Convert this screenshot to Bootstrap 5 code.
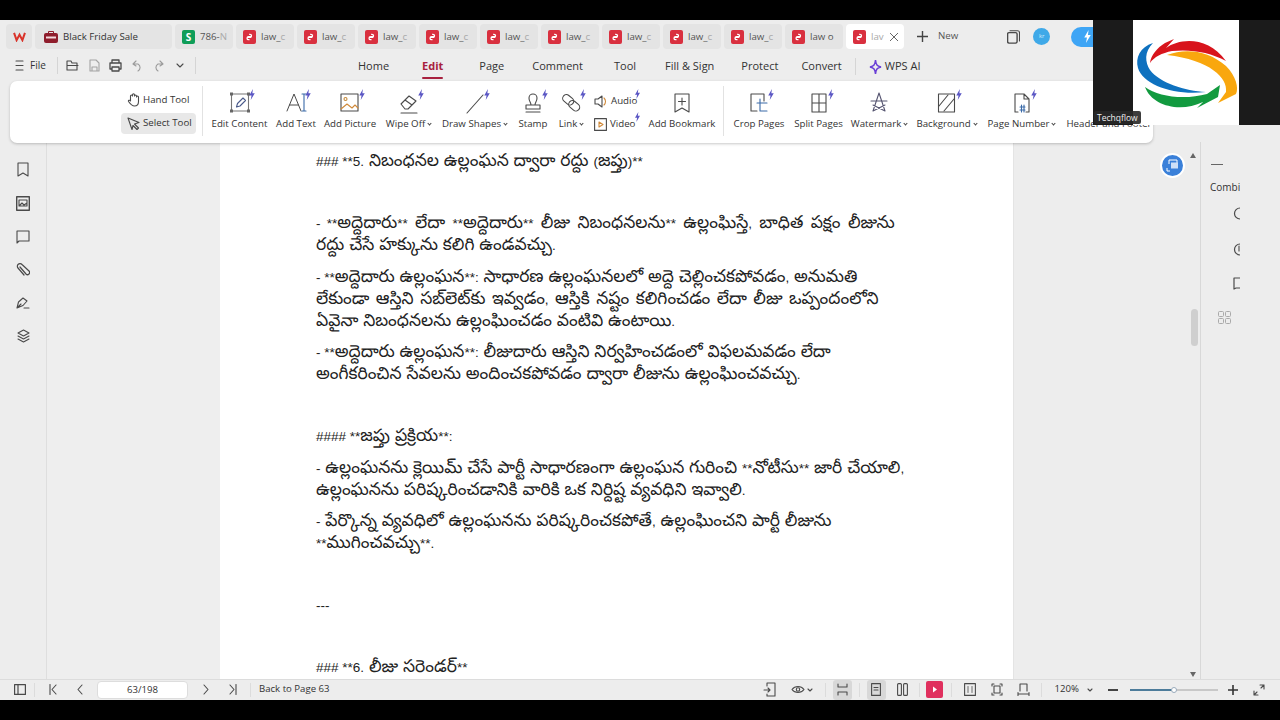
<!DOCTYPE html>
<html lang="te">
<head>
<meta charset="UTF-8">
<title>WPS PDF</title>
<link href="https://cdn.jsdelivr.net/npm/bootstrap@5.3.1/dist/css/bootstrap.min.css" rel="stylesheet">
<style>
html, body { height: 100%; overflow: hidden; background: #000; }
body { font-family: "Open Sans", "Liberation Sans", sans-serif; color: #333; }
svg { display: block; flex: none; }
.ic { fill: none; stroke: #4a4a4a; stroke-width: 1.1; stroke-linejoin: round; stroke-linecap: round; }

.app-frame { position: relative; width: 1280px; height: 720px; padding: 20px 0; overflow: hidden; }
.app-inner { height: 680px; background: #ededed; display: flex; flex-direction: column; }

/* tabs */
.tab-strip { height: 30px; padding: 4px 0 1px 6px; gap: 3px; }
.tab-item { height: 25px; width: 58px; border-radius: 4px; background: #e4e4e4; font-size: 9.7px; color: #555; padding-left: 7px; gap: 5px; white-space: nowrap; overflow: hidden; flex: none; }
.tab-item > span:not(.tab-s):not(.tab-pdf) { padding-top: 2px; }
.tab-logo { width: 26px; padding: 0; justify-content: center; }
.tab-sale { width: 137px; padding-left: 9px; color: #333; }
.tab-active { background: #fff; }
.tab-fade { color: #aaa; }
.tab-s { width: 13px; height: 14px; background: #0f9d58; color: #fff; border-radius: 2px; font-size: 10px; font-weight: 700; text-align: center; line-height: 14px; flex: none; }
.tab-pdf { width: 13px; height: 14px; background: #d9303f; border-radius: 2px; flex: none; padding: 2px 3px; }
.new-tab { font-size: 9.7px; color: #555; margin-left: 10px; gap: 10px; }
.win-ic { margin-left: 46px; }
.user-dot { width: 17px; height: 17px; border-radius: 50%; background: #3fa9e8; color: #cfe9fa; font-size: 6px; text-align: center; line-height: 17px; margin-left: 10px; flex: none; }
.bolt-pill { width: 40px; height: 20px; background: #3ea5f5; border-radius: 10px 0 0 10px; margin-left: 18px; padding-left: 12px; flex: none; }

/* menu row */
.menu-row { height: 31px; font-size: 11px; position: relative; }
.quick-bar { width: 198px; padding-left: 15px; height: 100%; flex: none; }
.file-txt { font-size: 10px; margin: 0 11px 0 6px; }
.quick-sep { width: 1px; height: 17px; background: #d5d5d5; flex: none; }
.quick-btn { width: 21.5px; display: flex; justify-content: center; flex: none; }
.menu-links { margin-left: 160px; padding-top: 2px; white-space: nowrap; }
.menu-links > span:nth-child(2) { margin-left: 33px; }
.menu-links > span:nth-child(3) { margin-left: 36px; }
.menu-links > span:nth-child(4) { margin-left: 28px; }
.menu-links > span:nth-child(5) { margin-left: 31px; }
.menu-links > span:nth-child(6) { margin-left: 29px; }
.menu-links > span:nth-child(7) { margin-left: 27px; }
.menu-links > span:nth-child(8) { margin-left: 23px; }
.menu-on { color: #a8213f; font-weight: 700; position: relative; }
.menu-on::after { content: ""; position: absolute; left: 0; right: 0; bottom: -4px; height: 2px; background: #a8213f; border-radius: 1px; }
.menu-links > .ai-link { gap: 3px; margin-left: 13px; padding-left: 13px; border-left: 1px solid #d5d5d5; }

/* ribbon */
.ribbon-card { height: 62px; margin: 0 127px 0 10px; background: #fff; border-radius: 7px; box-shadow: 0 1px 3px rgba(0,0,0,.22); padding: 3px 0 0; position: relative; z-index: 2; font-size: 9.7px; white-space: nowrap; }
.hand-col { width: 192px; padding: 5px 0 0 111px; flex: none; }
.hand-row { height: 22px; gap: 3px; padding-left: 6px; }
.hand-on { background: #e8e8e8; border-radius: 4px; margin-top: 2px; width: 75px; height: 21px; }
.rib-sep { width: 1px; height: 50px; background: #e2e2e2; flex: none; margin-top: 2px; }
.tool-tile { display: flex; flex-direction: column; align-items: center; flex: none; height: 52px; position: relative; }
.tool-tile svg.main { margin-top: 5px; height: 26px; }
.tool-tile span { margin-top: 2px; line-height: 14px; }
.tool-bolt { position: absolute; top: 5px; left: calc(50% + 8px); }
.media-bolt { position: absolute; top: -1px; right: 1px; }
.caret-mini::after { content: ""; display: inline-block; width: 3px; height: 3px; border-right: 1px solid #444; border-bottom: 1px solid #444; transform: rotate(45deg); margin: 0 0 2px 3px; }
.w-edit { width: 55px; margin-left: 9px; }
.w-text { width: 40px; margin-left: 9px; }
.w-pic { width: 52px; margin-left: 8px; }
.w-wipe { width: 47px; margin-left: 9px; }
.w-draw { width: 65px; margin-left: 10px; }
.w-stamp { width: 30px; margin-left: 11px; }
.w-link { width: 26px; margin-left: 10px; }
.w-book { width: 68px; margin-left: 6px; }
.w-crop { width: 50px; margin-left: 10px; }
.w-split { width: 49px; margin-left: 10px; }
.w-mark { width: 56px; margin-left: 8px; }
.w-back { width: 61px; margin-left: 9px; }
.w-num { width: 69px; margin-left: 10px; }
.w-head { width: 90px; margin-left: 8px; }
.media-col { width: 48px; margin-left: 10px; padding-top: 6px; flex: none; }
.media-row { height: 23px; gap: 3px; position: relative; }
.sep-b { margin-left: 7px; }

/* body */
.work-area { height: 537px; margin-top: -1px; }
.side-rail { width: 47px; border-right: 1px solid #dedede; flex: none; padding-top: 20px; gap: 19px; }
.gray-left { width: 173px; flex: none; background: #eeeeee; }
.pdf-sheet { width: 793px; flex: none; background: #fff; padding: 10px 0 0 96px; font-family: "Noto Sans Telugu", "Noto Sans", "DejaVu Sans", sans-serif; font-size: 17.2px; line-height: 22px; color: #222; overflow: hidden; white-space: nowrap; }
.pdf-sheet p { margin: 0 0 9.5px; }
.pdf-sheet p.big-gap { margin-bottom: 40px; }
.lat-run { font-family: "Liberation Sans", Arial, sans-serif; font-size: 13.5px; line-height: 0; }
.line-wide { word-spacing: 2.5px; }
.line-wide-b { word-spacing: 1.6px; }
.gray-right { width: 187px; flex: none; position: relative; border-left: 1px solid #e4e4e4; }
.float-btn { position: absolute; left: 146px; top: 11px; width: 25px; height: 25px; border-radius: 50%; background: #3a80d9; border: 2px solid #fff; padding: 4px; }
.scroll-up, .scroll-down { position: absolute; left: 176px; width: 0; height: 0; border-left: 3px solid transparent; border-right: 3px solid transparent; }
.scroll-up { top: 11px; border-bottom: 5px solid #666; }
.scroll-down { bottom: 2px; border-top: 5px solid #666; }
.scroll-thumb { position: absolute; left: 177px; top: 167px; width: 7px; height: 37px; background: #cfcfcf; border-radius: 4px; }
.right-panel { flex: 1; border-left: 1px solid #d8d8d8; position: relative; font-size: 10px; }
.panel-clip { width: 39px; overflow: hidden; padding: 22px 0 0 9px; }
.panel-dash { width: 12px; height: 1px; background: #666; margin-left: 1px; }
.panel-title { margin-top: 15px; line-height: 14px; white-space: nowrap; }
.panel-cut { width: 10px; height: 13px; margin: 13px 0 0 23px; overflow: hidden; }
.panel-cut.gap-a { margin-top: 23px; }
.panel-cut.gap-b { margin-top: 21px; }
.panel-grid { margin: 21px 0 0 8px; }

/* status bar */
.status-row { height: 20px; border-top: 1px solid #dcdcdc; font-size: 9.6px; position: relative; z-index: 2; }
.st-left { padding-left: 14px; }
.st-btn { width: 27px; display: flex; justify-content: center; align-items: center; height: 20px; flex: none; }
.st-sep { width: 1px; height: 14px; background: #dcdcdc; flex: none; }
.page-box { width: 91px; height: 18px; background: #fff; border: 1px solid #ddd; border-radius: 4px; text-align: center; line-height: 15px; margin: 0 4px; flex: none; }
.st-hot { background: #d8d8d8; border-radius: 3px; }
.st-tiny { width: 19px; margin: 0 7px; }
.st-tiny-b { margin-left: .5px; }
.st-play { width: 17px; margin: 0 8px 0 6px; }
.st-eye { width: 19px; margin-left: 5px; }
.st-eye-caret { margin-right: 11.5px; }
.st-zoombtn-a { margin-left: 4px; }
.st-zoombtn-b { margin-right: 3.5px; }
.zoom-txt { margin: 0 2px 0 13px; width: 30px; }
.zoom-caret { margin-right: 15px; }
.zoom-track { width: 88px; height: 2px; background: #c8c8c8; position: relative; flex: none; margin: 0 3px 0 12px; }
.zoom-fill { width: 44px; height: 2px; background: #4d7c9b; }
.zoom-knob { position: absolute; left: 41px; top: -2px; width: 6px; height: 6px; border-radius: 50%; background: #fff; border: 1px solid #9ab; }
.zoom-plus { margin-left: 7px; }
.full-btn { margin: 0 7.5px 0 8px; }
.back-lnk { margin-left: 8px; }

/* webcam overlay */
.cam-box { position: absolute; left: 1093px; top: 20px; width: 187px; height: 105px; display: flex; z-index: 5; }
.cam-dark { width: 40px; background: #1b1b1b; flex: none; }
.cam-white { width: 106px; background: #fff; flex: none; }
.cam-dark-b { flex: 1; background: #1b1b1b; }
.cam-name { position: absolute; left: 1px; bottom: 1px; background: rgba(40,40,40,.9); color: #eee; font-size: 8.5px; line-height: 13px; padding: 0 3px; border-radius: 2px; }
</style>
</head>
<body>
<svg width="0" height="0" class="position-absolute">
  <symbol id="bolt" viewBox="0 0 8 12"><path fill="#5a56c4" d="M5 0 1 7h2.500L2.600 12 7 4.600H4.400z"/></symbol>
  <symbol id="pdfmark" viewBox="0 0 8 10"><path fill="none" stroke="#fff" stroke-width="1.500" d="M1.500 5.500h3a1.700 1.700 0 0 0 0-3.600H3.600M6 4.500H3a1.700 1.700 0 0 0 0 3.600h1"/></symbol>
</svg>

<div class="app-frame">
  <div class="app-inner">

    <div class="tab-strip d-flex align-items-center">
      <div class="tab-item tab-logo d-flex align-items-center">
        <svg width="13" height="10" viewBox="0 0 14 11"><path fill="none" stroke="#d9342b" stroke-width="2.200" d="M1 1l2.800 8L7 3l3.200 6L13 1"/></svg>
      </div>
      <div class="tab-item tab-sale d-flex align-items-center">
        <svg width="14" height="13" viewBox="0 0 14 13"><path fill="none" stroke="#8f1d2c" d="M4.500 3V1.500h5V3"/><rect y="3" width="14" height="10" rx="2" fill="#8f1d2c"/><rect x="2" y="6.500" width="10" height="2" fill="#f3d9dc"/></svg>
        <span>Black Friday Sale</span>
      </div>
      <div class="tab-item d-flex align-items-center"><span class="tab-s">S</span><span>786-<span class="tab-fade">N</span></span></div>
      <div class="tab-item d-flex align-items-center"><span class="tab-pdf"><svg width="7" height="10"><use href="#pdfmark"/></svg></span><span>law_<span class="tab-fade">c</span></span></div>
      <div class="tab-item d-flex align-items-center"><span class="tab-pdf"><svg width="7" height="10"><use href="#pdfmark"/></svg></span><span>law_<span class="tab-fade">c</span></span></div>
      <div class="tab-item d-flex align-items-center"><span class="tab-pdf"><svg width="7" height="10"><use href="#pdfmark"/></svg></span><span>law_<span class="tab-fade">c</span></span></div>
      <div class="tab-item d-flex align-items-center"><span class="tab-pdf"><svg width="7" height="10"><use href="#pdfmark"/></svg></span><span>law_<span class="tab-fade">c</span></span></div>
      <div class="tab-item d-flex align-items-center"><span class="tab-pdf"><svg width="7" height="10"><use href="#pdfmark"/></svg></span><span>law_<span class="tab-fade">c</span></span></div>
      <div class="tab-item d-flex align-items-center"><span class="tab-pdf"><svg width="7" height="10"><use href="#pdfmark"/></svg></span><span>law_<span class="tab-fade">c</span></span></div>
      <div class="tab-item d-flex align-items-center"><span class="tab-pdf"><svg width="7" height="10"><use href="#pdfmark"/></svg></span><span>law_<span class="tab-fade">c</span></span></div>
      <div class="tab-item d-flex align-items-center"><span class="tab-pdf"><svg width="7" height="10"><use href="#pdfmark"/></svg></span><span>law_<span class="tab-fade">c</span></span></div>
      <div class="tab-item d-flex align-items-center"><span class="tab-pdf"><svg width="7" height="10"><use href="#pdfmark"/></svg></span><span>law_<span class="tab-fade">c</span></span></div>
      <div class="tab-item d-flex align-items-center"><span class="tab-pdf"><svg width="7" height="10"><use href="#pdfmark"/></svg></span><span>law o</span></div>
      <div class="tab-item tab-active d-flex align-items-center"><span class="tab-pdf"><svg width="7" height="10"><use href="#pdfmark"/></svg></span><span class="tab-fade">lav</span>
        <svg width="10" height="10" viewBox="0 0 10 10"><path stroke="#666" d="M1 1l8 8M9 1l-8 8"/></svg></div>
      <div class="new-tab d-flex align-items-center">
        <svg width="11" height="11" viewBox="0 0 11 11"><path stroke="#444" stroke-width="1.400" d="M5.500 0v11M0 5.500h11"/></svg>New
      </div>
      <svg class="ic win-ic" width="13" height="14" viewBox="0 0 13 14"><rect x=".6" y="2.600" width="9.500" height="10.500" rx="1.500" stroke-width="1.400"/><path d="M3 .7h7.500a2 2 0 0 1 2 2V11"/></svg>
      <div class="user-dot">kr</div>
      <div class="bolt-pill d-flex align-items-center"><svg width="9" height="13" viewBox="0 0 8 12"><path fill="#fff" d="M5 0 1 7h2.500L2.600 12 7 4.600H4.400z"/></svg></div>
    </div>

    <div class="menu-row d-flex align-items-center">
      <div class="quick-bar d-flex align-items-center">
        <svg class="ic" width="9" height="11" viewBox="0 0 9 11"><path d="M1 1h7M1 5.500h7M1 10h7"/></svg>
        <span class="file-txt">File</span>
        <span class="quick-sep"></span>
        <span class="quick-btn ms-1"><svg class="ic" width="13" height="11" viewBox="0 0 13 11"><path d="M1 10V1h4l1 2h5v7zM1 5.500h11"/></svg></span>
        <span class="quick-btn"><svg class="ic" width="11" height="13" viewBox="0 0 11 13" stroke-opacity=".45"><path d="M1 1h6l3 3v8H1zM3 12V8h5v4"/></svg></span>
        <span class="quick-btn"><svg class="ic" width="13" height="13" viewBox="0 0 13 13"><path d="M3 4V1h7v3M3 10H1V4h11v6h-2M3 8h7v4H3z" stroke-width="1.300"/></svg></span>
        <span class="quick-btn"><svg class="ic" width="11" height="12" viewBox="0 0 11 12" stroke-opacity=".5"><path d="M4 1 1 4l3 2M1 4h5a4 4 0 0 1 0 7"/></svg></span>
        <span class="quick-btn"><svg class="ic" width="11" height="12" viewBox="0 0 11 12" stroke-opacity=".5"><path d="M7 1l3 3-3 2M10 4H5a4 4 0 0 0 0 7"/></svg></span>
        <span class="quick-btn"><svg class="ic" width="8" height="5" viewBox="0 0 8 5"><path d="M1 1l3 3 3-3"/></svg></span>
        <span class="quick-sep ms-1"></span>
      </div>
      <div class="menu-links d-flex align-items-center">
        <span>Home</span><span class="menu-on">Edit</span><span>Page</span><span>Comment</span><span>Tool</span><span>Fill &amp; Sign</span><span>Protect</span><span>Convert</span>
        <span class="ai-link d-flex align-items-center">
          <svg width="13" height="16" viewBox="0 0 13 16"><path fill="none" stroke="#6a3fd6" stroke-width="1.500" d="M6.500 1C7 6 8 7 12 8 8 9 7 10 6.500 15 6 10 5 9 1 8 5 7 6 6 6.500 1z"/></svg>WPS AI
        </span>
      </div>
    </div>

    <div class="ribbon-card d-flex">
      <div class="hand-col">
        <div class="hand-row d-flex align-items-center">
          <svg class="ic" width="13" height="14" viewBox="0 0 13 14"><path d="M3.500 8V3a1 1 0 0 1 2 0V1.800a1 1 0 0 1 2 0V3a1 1 0 0 1 2 0v1a1 1 0 0 1 2 0v4.500C11.500 11 10 13 7.500 13 5 13 4 12 1.500 8.500 1 7.500 2.500 6.500 3.500 8z"/></svg>Hand Tool
        </div>
        <div class="hand-row hand-on d-flex align-items-center">
          <svg class="ic" width="13" height="13" viewBox="0 0 13 13"><path d="M1 1l11 4.500-4.500 1.500 4 4-1.500 1.500-4-4L5 12.500z"/></svg>Select Tool
        </div>
      </div>
      <div class="rib-sep"></div>

      <div class="tool-tile w-edit">
        <svg class="main ic" width="22" height="26" viewBox="0 0 22 26"><rect x="2.500" y="5" width="17" height="17" stroke="#777"/><path d="M7.500 18l1-3.500 5.500-5.500 2.500 2.500-5.500 5.500z" stroke="#4a5a8a"/><path d="M1 3.500h3v3H1zM18 3.500h3v3h-3zM1 20.500h3v3H1zM18 20.500h3v3h-3z" fill="#666" stroke="none"/></svg>
        <svg class="tool-bolt" width="8" height="11"><use href="#bolt"/></svg><span>Edit Content</span>
      </div>
      <div class="tool-tile w-text">
        <svg class="main ic" width="22" height="26" viewBox="0 0 22 26"><path d="M2 22 9 5l7 17M4.500 16h9" stroke-width="1"/><path d="M17 5h4M19 5v17M17 22h4" stroke="#3a6aa8"/></svg>
        <svg class="tool-bolt" width="8" height="11"><use href="#bolt"/></svg><span>Add Text</span>
      </div>
      <div class="tool-tile w-pic">
        <svg class="main ic" width="20" height="26" viewBox="0 0 20 26"><rect x="1" y="5" width="17" height="17"/><circle cx="5.500" cy="10" r="1.500" stroke="#c58a3a"/><path d="M1 20l6-5 5 4 3-3 3 3" stroke="#d08a3a"/></svg>
        <svg class="tool-bolt" width="8" height="11"><use href="#bolt"/></svg><span>Add Picture</span>
      </div>
      <div class="tool-tile w-wipe">
        <svg class="main ic" width="20" height="26" viewBox="0 0 20 26"><path d="M2 15l8-8 7 5-8 8H6zM6 11l7 5M2 24h16"/></svg>
        <svg class="tool-bolt" width="8" height="11"><use href="#bolt"/></svg><span class="caret-mini">Wipe Off</span>
      </div>
      <div class="tool-tile w-draw">
        <svg class="main ic" width="20" height="26" viewBox="0 0 20 26"><path d="M2 24 18 6"/></svg>
        <svg class="tool-bolt" width="8" height="11"><use href="#bolt"/></svg><span class="caret-mini">Draw Shapes</span>
      </div>
      <div class="tool-tile w-stamp">
        <svg class="main ic" width="18" height="26" viewBox="0 0 18 26"><path d="M7 16c0-3-2-3-2-7a4 4 0 0 1 8 0c0 4-2 4-2 7zM2 16h14v4H2zM2 23h14"/></svg>
        <svg class="tool-bolt" width="8" height="11"><use href="#bolt"/></svg><span>Stamp</span>
      </div>
      <div class="tool-tile w-link">
        <svg class="main ic" width="20" height="26" viewBox="0 0 20 26"><rect x="1" y="7" width="12" height="7.500" rx="3.700" transform="rotate(40 7 11)"/><rect x="7" y="13" width="12" height="7.500" rx="3.700" transform="rotate(40 13 17)"/></svg>
        <svg class="tool-bolt" width="8" height="11"><use href="#bolt"/></svg><span class="caret-mini">Link</span>
      </div>
      <div class="media-col">
        <div class="media-row d-flex align-items-center">
          <svg class="ic" width="14" height="13" viewBox="0 0 14 13"><path d="M1 4h3l4-3v11L4 9H1z"/><path d="M10 3c2 2 2 5 0 7" stroke="#d08a3a"/></svg>Audio
          <svg class="media-bolt" width="7" height="10"><use href="#bolt"/></svg>
        </div>
        <div class="media-row d-flex align-items-center">
          <svg class="ic" width="13" height="13" viewBox="0 0 13 13"><rect x=".6" y=".6" width="11.800" height="11.800"/><path d="M5 4v5l4-2.500z" stroke="#d08a3a"/></svg>Video
          <svg class="media-bolt" width="7" height="10"><use href="#bolt"/></svg>
        </div>
      </div>
      <div class="tool-tile w-book">
        <svg class="main ic" width="16" height="26" viewBox="0 0 16 26"><path d="M1 5h14v18l-7-4-7 4zM8 9v7M4.500 12.500h7"/></svg><span>Add Bookmark</span>
      </div>
      <div class="rib-sep sep-b"></div>

      <div class="tool-tile w-crop">
        <svg class="main ic" width="20" height="26" viewBox="0 0 20 26"><path d="M15 12V5H2v17h6"/><path d="M8 14h10M11 10v12h7" stroke="#3a6aa8"/></svg>
        <svg class="tool-bolt" width="8" height="11"><use href="#bolt"/></svg><span>Crop Pages</span>
      </div>
      <div class="tool-tile w-split">
        <svg class="main ic" width="18" height="26" viewBox="0 0 18 26"><path d="M2 5h14v18H2zM9 5v18M2 14h14"/></svg>
        <svg class="tool-bolt" width="8" height="11"><use href="#bolt"/></svg><span>Split Pages</span>
      </div>
      <div class="tool-tile w-mark">
        <svg class="main ic" width="18" height="26" viewBox="0 0 18 26"><path d="M9 4 3 22M9 4l6 18M1 12h16M3 22l12-6M15 22 3 16" stroke="#555470"/></svg><span class="caret-mini">Watermark</span>
      </div>
      <div class="tool-tile w-back">
        <svg class="main ic" width="20" height="26" viewBox="0 0 20 26"><rect x="1.500" y="5" width="16" height="18"/><path d="M2 17l9-11M7 22l10-12"/></svg>
        <svg class="tool-bolt" width="8" height="11"><use href="#bolt"/></svg><span class="caret-mini">Background</span>
      </div>
      <div class="tool-tile w-num">
        <svg class="main ic" width="18" height="26" viewBox="0 0 18 26"><path d="M5 23H2V5h9l5 5v13h-3M11 5v5h5"/><path d="M7 18h5M7 21h5M8.500 16v7M11 16v7" stroke="#3a6aa8"/></svg>
        <svg class="tool-bolt" width="8" height="11"><use href="#bolt"/></svg><span class="caret-mini">Page Number</span>
      </div>
      <div class="tool-tile w-head"><svg class="main" width="18" height="26"></svg><span>Header and Footer</span></div>
    </div>

    <div class="work-area d-flex">
      <div class="side-rail d-flex flex-column align-items-center">
        <svg class="ic" width="12" height="15" viewBox="0 0 12 15"><path d="M1 1h10v13l-5-3-5 3z"/></svg>
        <svg class="ic" width="14" height="15" viewBox="0 0 14 15"><rect x=".7" y=".7" width="12.600" height="13.600" stroke-width="1.400"/><path d="M3 4h8v6H3zM3 10l3-3 2 2 3-2"/></svg>
        <svg class="ic" width="14" height="14" viewBox="0 0 14 14"><path d="M1 1h12v10H3l-2 2z"/></svg>
        <svg class="ic" width="14" height="14" viewBox="0 0 14 14"><path d="M4 4l6 7a2 2 0 0 0 3-3L6 1.500A2.500 2.500 0 0 0 2 5l6 7" stroke-width="1.200"/></svg>
        <svg class="ic" width="14" height="14" viewBox="0 0 14 14"><path d="M1 12l1.500-6L7 2l4 3-4 4.500zM1 12l4-4M8 12h5"/></svg>
        <svg class="ic" width="13" height="14" viewBox="0 0 13 14"><path d="M6.500 1l5.500 3-5.500 3L1 4zM1 7l5.500 3L12 7M1 10l5.500 3 5.500-3"/></svg>
      </div>
      <div class="gray-left"></div>
      <div class="pdf-sheet">
        <p class="big-gap"><span class="lat-run">### **5.</span> నిబంధనల ఉల్లంఘన ద్వారా రద్దు <span class="lat-run">(</span>జప్తు<span class="lat-run">)**</span></p>
        <p><span class="line-wide"><span class="lat-run">- **</span>అద్దెదారు<span class="lat-run">**</span> లేదా <span class="lat-run">**</span>అద్దెదారు<span class="lat-run">**</span> లీజు నిబంధనలను<span class="lat-run">**</span> ఉల్లంఘిస్తే<span class="lat-run">,</span> బాధిత పక్షం లీజును</span><br>రద్దు చేసే హక్కును కలిగి ఉండవచ్చు<span class="lat-run">.</span></p>
        <p><span class="lat-run">- **</span>అద్దెదారు ఉల్లంఘన<span class="lat-run">**:</span> సాధారణ ఉల్లంఘనలలో అద్దె చెల్లించకపోవడం<span class="lat-run">,</span> అనుమతి<br><span class="line-wide-b">లేకుండా ఆస్తిని సబ్&zwnj;లెట్&zwnj;కు ఇవ్వడం<span class="lat-run">,</span> ఆస్తికి నష్టం కలిగించడం లేదా లీజు ఒప్పందంలోని</span><br>ఏవైనా నిబంధనలను ఉల్లంఘించడం వంటివి ఉంటాయి<span class="lat-run">.</span></p>
        <p class="big-gap"><span class="lat-run">- **</span>అద్దెదారు ఉల్లంఘన<span class="lat-run">**:</span> లీజుదారు ఆస్తిని నిర్వహించడంలో విఫలమవడం లేదా<br>అంగీకరించిన సేవలను అందించకపోవడం ద్వారా లీజును ఉల్లంఘించవచ్చు<span class="lat-run">.</span></p>
        <p><span class="lat-run">#### **</span>జప్తు ప్రక్రియ<span class="lat-run">**:</span></p>
        <p><span class="lat-run">-</span> ఉల్లంఘనను క్లెయిమ్ చేసే పార్టీ సాధారణంగా ఉల్లంఘన గురించి <span class="lat-run">**</span>నోటీసు<span class="lat-run">**</span> జారీ చేయాలి<span class="lat-run">,</span><br>ఉల్లంఘనను పరిష్కరించడానికి వారికి ఒక నిర్దిష్ట వ్యవధిని ఇవ్వాలి<span class="lat-run">.</span></p>
        <p class="big-gap"><span class="lat-run">-</span> పేర్కొన్న వ్యవధిలో ఉల్లంఘనను పరిష్కరించకపోతే<span class="lat-run">,</span> ఉల్లంఘించని పార్టీ లీజును<br><span class="lat-run">**</span>ముగించవచ్చు<span class="lat-run">**.</span></p>
        <p class="big-gap"><span class="lat-run">---</span></p>
        <p><span class="lat-run">### **6.</span> లీజు సరెండర్<span class="lat-run">**</span></p>
      </div>
      <div class="gray-right">
        <div class="float-btn"><svg width="13" height="13" viewBox="0 0 13 13"><path fill="none" stroke="#fff" d="M3 5V1h8v6M1 9v3h3"/><rect x="5" y="3.500" width="7" height="6" fill="#cfe0f7"/></svg></div>
        <div class="scroll-up"></div><div class="scroll-thumb"></div><div class="scroll-down"></div>
      </div>
      <div class="right-panel">
        <div class="panel-clip">
          <div class="panel-dash"></div>
          <div class="panel-title">Combi</div>
          <div class="panel-cut"><svg class="ic" width="14" height="13" viewBox="0 0 14 13"><circle cx="7" cy="6.500" r="5.500" stroke-width="1.200"/></svg></div>
          <div class="panel-cut gap-a"><svg class="ic" width="14" height="13" viewBox="0 0 14 13"><circle cx="7" cy="6.500" r="5.500" stroke-width="1.200"/><path d="M6 3v5"/></svg></div>
          <div class="panel-cut gap-b"><svg class="ic" width="14" height="13" viewBox="0 0 14 13"><path d="M1 1h10v10H3l-2 1z" stroke-width="1.200"/></svg></div>
          <svg class="panel-grid" width="13" height="13" viewBox="0 0 13 13" fill="none" stroke="#aaa"><rect x=".5" y=".5" width="5" height="5" rx="1"/><rect x="7.500" y=".5" width="5" height="5" rx="1"/><rect x=".5" y="7.500" width="5" height="5" rx="1"/><rect x="7.500" y="7.500" width="5" height="5" rx="1"/></svg>
        </div>
      </div>
    </div>

    <div class="status-row d-flex align-items-center justify-content-between">
      <div class="st-left d-flex align-items-center">
        <svg class="ic" width="12" height="11" viewBox="0 0 12 11"><rect x=".6" y=".6" width="10.800" height="9.800" stroke-width="1.200"/><path d="M4 1v9" stroke-width="1.200"/></svg>
        <span class="st-sep ms-2 me-1"></span>
        <span class="st-btn"><svg class="ic" width="8" height="11" viewBox="0 0 8 11"><path d="M1 .5v10M7 1 3 5.500 7 10"/></svg></span>
        <span class="st-btn"><svg class="ic" width="6" height="11" viewBox="0 0 6 11"><path d="M5 1 1 5.500 5 10"/></svg></span>
        <div class="page-box">63/198</div>
        <span class="st-btn"><svg class="ic" width="6" height="11" viewBox="0 0 6 11"><path d="M1 1l4 4.500L1 10"/></svg></span>
        <span class="st-btn"><svg class="ic" width="8" height="11" viewBox="0 0 8 11"><path d="M7 .5v10M1 1l4 4.500L1 10"/></svg></span>
        <span class="st-sep ms-1"></span>
        <span class="back-lnk">Back to Page 63</span>
      </div>
      <div class="d-flex align-items-center">
        <span class="st-btn"><svg class="ic" width="13" height="15" viewBox="0 0 13 15"><path d="M4 4V1h8v13H4v-2M1 8h6M5 6l2 2-2 2"/></svg></span>
        <span class="st-btn st-eye"><svg class="ic" width="14" height="9" viewBox="0 0 14 9"><path d="M1 4.500C4 .5 10 .5 13 4.500 10 8.500 4 8.500 1 4.500z"/><circle cx="7" cy="4.500" r="1.700"/></svg></span>
        <svg class="ic st-eye-caret" width="6" height="4" viewBox="0 0 6 4"><path d="M1 1l2 2 2-2"/></svg>
        <span class="st-sep"></span>
        <span class="st-btn st-tiny st-hot"><svg class="ic" width="11" height="13" viewBox="0 0 11 13"><path d="M1 1v3h9V1M1 12V9h9v3"/></svg></span>
        <span class="st-sep"></span>
        <span class="st-btn st-tiny st-hot"><svg class="ic" width="10" height="13" viewBox="0 0 10 13"><rect x=".6" y=".6" width="8.800" height="11.800"/><path d="M3 4.500h4M3 7h4"/></svg></span>
        <span class="st-btn st-tiny st-tiny-b"><svg class="ic" width="11" height="13" viewBox="0 0 11 13"><rect x=".6" y=".6" width="3.800" height="11.800" rx="1"/><rect x="6.600" y=".6" width="3.800" height="11.800" rx="1"/></svg></span>
        <span class="st-sep"></span>
        <span class="st-btn st-play"><svg width="17" height="17" viewBox="0 0 17 17"><rect width="17" height="17" rx="2" fill="#e0305e"/><path d="M7 5.500v6l4-3z" fill="#fff"/></svg></span>
        <span class="st-sep"></span>
        <span class="st-btn st-zoombtn-a"><svg class="ic" width="12" height="13" viewBox="0 0 12 13"><rect x=".6" y=".6" width="10.800" height="11.800"/><path d="M4 3.500v6M8 3.500v6" stroke-width=".8"/></svg></span>
        <span class="st-btn"><svg class="ic" width="12" height="13" viewBox="0 0 12 13"><path d="M1 3V1h2M9 1h2v2M11 10v2H9M3 12H1v-2"/><rect x="3" y="3" width="6" height="7"/></svg></span>
        <span class="st-btn st-zoombtn-b"><svg class="ic" width="13" height="14" viewBox="0 0 13 14"><path d="M3 8V1h7v7M1 11h11M1 9.500v3M12 9.500v3"/></svg></span>
        <span class="st-sep"></span>
        <span class="zoom-txt">120%</span>
        <svg class="ic zoom-caret" width="6" height="4" viewBox="0 0 6 4"><path d="M1 1l2 2 2-2"/></svg>
        <svg width="10" height="2"><rect width="10" height="2" fill="#444"/></svg>
        <div class="zoom-track"><div class="zoom-fill"></div><div class="zoom-knob"></div></div>
        <svg class="zoom-plus" width="10" height="10" viewBox="0 0 10 10"><path stroke="#333" stroke-width="1.600" d="M5 0v10M0 5h10"/></svg>
        <span class="st-btn full-btn"><svg class="ic" width="12" height="12" viewBox="0 0 12 12"><path d="M7 1h4v4M5 11H1V7M11 1 8 4M1 11l3-3"/></svg></span>
      </div>
    </div>
  </div>

  <div class="cam-box">
    <div class="cam-dark"></div>
    <div class="cam-white">
      <svg width="106" height="105" viewBox="1133 20 106 105">
        <path fill="#d8141c" d="M1150 63C1151 55 1157 48 1165 43L1174 39 1166 48C1180 38 1208 36 1226 61 1210 52 1190 49 1172 51 1162 53 1154 57 1150 63z"/>
        <path fill="#f9a70e" d="M1167 55C1185 48 1208 50 1226 66 1236 76 1239 88 1236 94L1218 103 1226 92C1228 78 1210 60 1167 55z"/>
        <path fill="#0e71bf" d="M1153 43C1140 47 1135 58 1138 68 1143 85 1175 96 1206 92 1185 91 1160 83 1150 70 1145 62 1144 52 1153 43z"/>
        <path fill="#129a3f" d="M1145 87C1158 97 1185 100 1207 94L1220 85 1218 97 1197 108 1203 102C1180 113 1152 106 1145 87z"/>
      </svg>
    </div>
    <div class="cam-dark-b"></div>
    <div class="cam-name">Techqflow</div>
  </div>
</div>

<script src="https://cdn.jsdelivr.net/npm/bootstrap@5.3.1/dist/js/bootstrap.bundle.min.js"></script>
</body>
</html>
